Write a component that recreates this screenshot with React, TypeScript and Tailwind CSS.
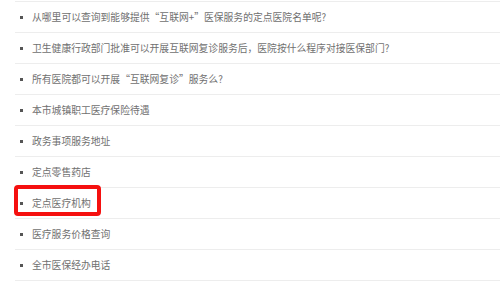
const ITEMS = [
  "从哪里可以查询到能够提供“互联网+”医保服务的定点医院名单呢?",
  "卫生健康行政部门批准可以开展互联网复诊服务后，医院按什么程序对接医保部门?",
  "所有医院都可以开展“互联网复诊”服务么?",
  "本市城镇职工医疗保险待遇",
  "政务事项服务地址",
  "定点零售药店",
  "定点医疗机构",
  "医疗服务价格查询",
  "全市医保经办电话",
];

export default function App() {
  return (
    <div
      className="h-[284px] w-[500px] overflow-hidden bg-white pl-[15px] pt-px"
      style={{ fontFamily: '"Noto Sans CJK SC", "Noto Sans", sans-serif' }}
    >
      <ul className="border-t border-[#ededed]">
        {ITEMS.map((text, i) => (
          <li
            key={text}
            className="relative flex h-[31px] items-center border-b border-[#ededed] pl-[5px]"
          >
            <span className="h-[3px] w-[3px] shrink-0 bg-[#555]" />
            <span className="ml-[9px] whitespace-nowrap text-[9.8px] text-[#707070]">{text}</span>
            {i === 6 && (
              <span className="absolute left-[-1px] top-[-3px] h-[31px] w-[87px] rounded-[4px] border-[4.5px] border-[#f5100f]" />
            )}
          </li>
        ))}
      </ul>
    </div>
  );
}
